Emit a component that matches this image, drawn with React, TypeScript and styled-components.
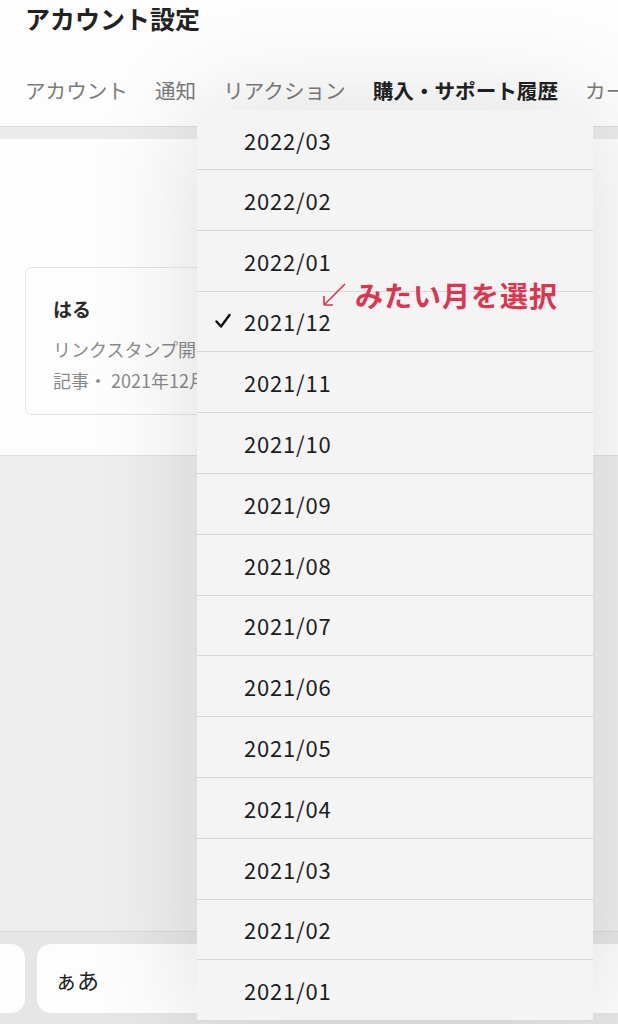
import styled, { createGlobalStyle } from 'styled-components'

const GlobalStyle = createGlobalStyle`
  body {
    margin: 0;
    font-family: "Noto Sans CJK JP", "Noto Sans", sans-serif;
    background: #ececec;
  }
`

const Page = styled.div`
  width: 618px;
  height: 1024px;
  position: relative;
  overflow: hidden;
  display: flex;
  flex-direction: column;
  background: #ededed;
`

const Header = styled.header`
  background: #fdfdfd;
  border-bottom: 1px solid #dcdcdc;
  height: 127px;
  box-sizing: border-box;
  padding: 0 0 0 25px;
  display: flex;
  flex-direction: column;
`

const Title = styled.h1`
  margin: 0;
  font-size: 25px;
  line-height: 36px;
  font-weight: 700;
  color: #222;
`

const Tabs = styled.nav`
  display: flex;
  gap: 27px;
  margin-top: 39px;
  white-space: nowrap;
  overflow: hidden;
`

const Tab = styled.span<{ $active?: boolean }>`
  font-size: 20.6px;
  line-height: 30px;
  color: ${(p) => (p.$active ? '#222' : '#7a7a7a')};
  font-weight: ${(p) => (p.$active ? 700 : 400)};
`

const Strip = styled.div`
  height: 12px;
  background: #ebebeb;
`

const Content = styled.section`
  background: #fdfdfd;
  height: 317px;
  border-bottom: 1px solid #e0e0e0;
  box-sizing: border-box;
  padding: 128px 0 0 25px;
`

const Card = styled.div`
  width: 500px;
  height: 148px;
  box-sizing: border-box;
  border: 1px solid #e6e6e6;
  border-radius: 6px;
  padding: 26px 0 0 27px;
`

const CardName = styled.div`
  font-size: 19px;
  font-weight: 700;
  color: #2a2a2a;
  line-height: 30px;
`

const CardText = styled.div<{ $gap?: number }>`
  font-size: 18px;
  color: #8a8a8a;
  line-height: 31px;
  white-space: nowrap;
  margin-top: ${(p) => p.$gap ?? 0}px;
`

const Filler = styled.div`
  flex: 1;
  background: #eeeeee;
  border-bottom: 1px solid #d8d8d8;
`

const Keyboard = styled.div`
  height: 92px;
  background: #e6e6e6;
  display: flex;
  gap: 12px;
  padding: 12px 0 0;
  box-sizing: border-box;
  margin-left: -60px;
`

const Key = styled.div<{ $width: number }>`
  width: ${(p) => p.$width}px;
  flex-shrink: 0;
  height: 69px;
  background: #fdfdfd;
  border-radius: 14px;
  display: flex;
  align-items: center;
  padding-left: 18px;
  box-sizing: border-box;
  font-size: 22px;
  color: #222;
`

const Menu = styled.ul`
  position: absolute;
  left: 197px;
  top: 110px;
  width: 396px;
  margin: 0;
  padding: 0;
  list-style: none;
  background: #f4f4f4;
  border-radius: 14px 14px 0 0;
  box-shadow: 0 0 110px rgba(0, 0, 0, 0.13);
`

const Option = styled.li`
  height: 60.8px;
  box-sizing: border-box;
  border-bottom: 1px solid #d9d9d9;
  display: flex;
  align-items: center;
  padding-left: 47px;
  position: relative;
  font-size: 22px;
  letter-spacing: 0.8px;
  color: #1c1c1c;
  &:first-child {
    height: 60px;
  }
`

const Check = styled.svg`
  position: absolute;
  left: 18px;
  top: 50%;
  transform: translateY(-50%);
`

const Note = styled.div`
  position: absolute;
  left: 322px;
  top: 276px;
  display: flex;
  align-items: center;
  gap: 9px;
  color: #dc3550;
  font-size: 28px;
  letter-spacing: 1px;
  font-weight: 700;
  line-height: 38px;
`

const months = [
  '2022/03', '2022/02', '2022/01', '2021/12', '2021/11', '2021/10', '2021/09',
  '2021/08', '2021/07', '2021/06', '2021/05', '2021/04', '2021/03', '2021/02', '2021/01',
]

const App = () => {
  return (
    <>
      <GlobalStyle />
      <Page>
        <Header>
          <Title>アカウント設定</Title>
          <Tabs>
            <Tab>アカウント</Tab>
            <Tab>通知</Tab>
            <Tab>リアクション</Tab>
            <Tab $active>購入・サポート履歴</Tab>
            <Tab>カード</Tab>
          </Tabs>
        </Header>
        <Strip />
        <Content>
          <Card>
            <CardName>はる</CardName>
            <CardText $gap={10}>リンクスタンプ開発ストーリー</CardText>
            <CardText>記事・ 2021年12月</CardText>
          </Card>
        </Content>
        <Filler />
        <Keyboard>
          <Key $width={85} />
          <Key $width={500}>ぁあ</Key>
          <Key $width={100} />
        </Keyboard>

        <Menu>
          {months.map((m) => (
            <Option key={m}>
              {m === '2021/12' && (
                <Check width="16" height="15" viewBox="0 0 16 15">
                  <polyline points="1.5,8 6,13 14.5,1.5" fill="none" stroke="#111" strokeWidth="2.4" strokeLinecap="round" strokeLinejoin="round" />
                </Check>
              )}
              {m}
            </Option>
          ))}
        </Menu>
        <Note>
          <svg width="24" height="24" viewBox="0 0 24 24">
            <path d="M23 1 L2 22 M2 22 L2 13 M2 22 L11 22" fill="none" stroke="#dc3550" strokeWidth="1.6" />
          </svg>
          みたい月を選択
        </Note>
      </Page>
    </>
  )
}

export default App
